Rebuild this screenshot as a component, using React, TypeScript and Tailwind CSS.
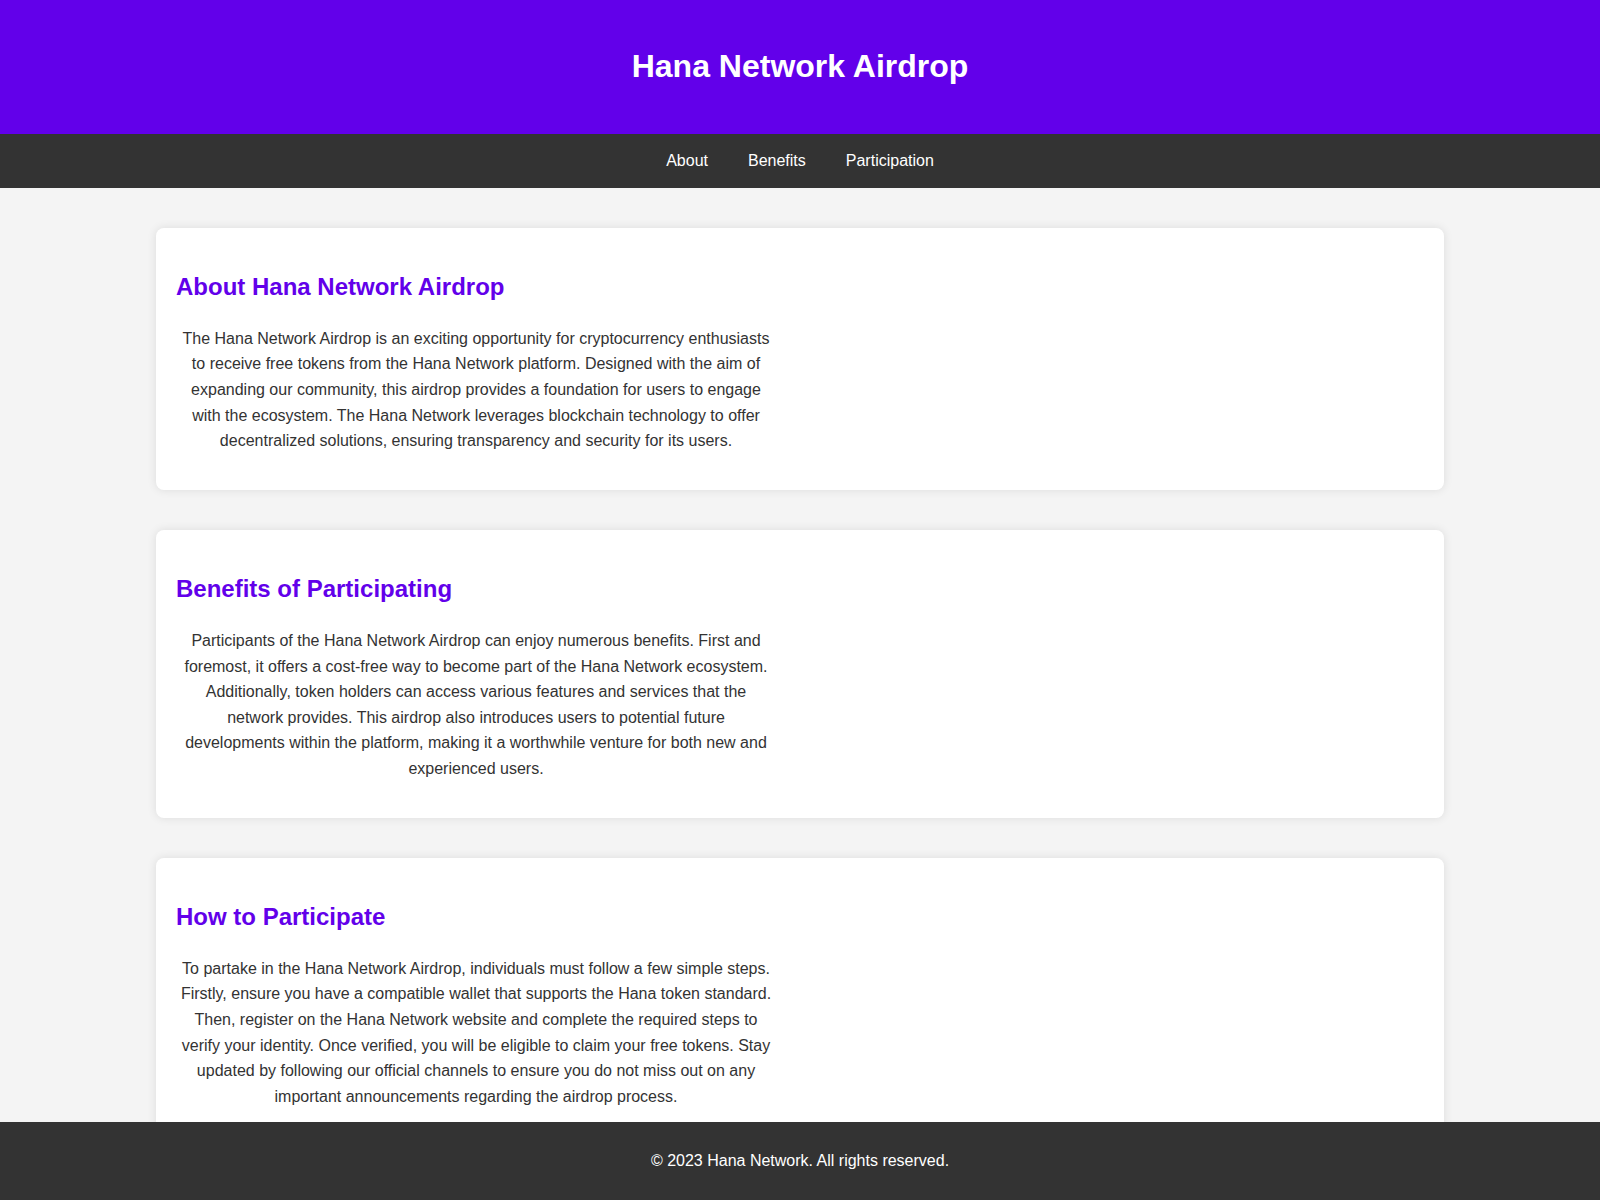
const sections = [
  {
    id: 'about',
    title: 'About Hana Network Airdrop',
    text: 'The Hana Network Airdrop is an exciting opportunity for cryptocurrency enthusiasts to receive free tokens from the Hana Network platform. Designed with the aim of expanding our community, this airdrop provides a foundation for users to engage with the ecosystem. The Hana Network leverages blockchain technology to offer decentralized solutions, ensuring transparency and security for its users.',
  },
  {
    id: 'benefits',
    title: 'Benefits of Participating',
    text: 'Participants of the Hana Network Airdrop can enjoy numerous benefits. First and foremost, it offers a cost-free way to become part of the Hana Network ecosystem. Additionally, token holders can access various features and services that the network provides. This airdrop also introduces users to potential future developments within the platform, making it a worthwhile venture for both new and experienced users.',
  },
  {
    id: 'participation',
    title: 'How to Participate',
    text: 'To partake in the Hana Network Airdrop, individuals must follow a few simple steps. Firstly, ensure you have a compatible wallet that supports the Hana token standard. Then, register on the Hana Network website and complete the required steps to verify your identity. Once verified, you will be eligible to claim your free tokens. Stay updated by following our official channels to ensure you do not miss out on any important announcements regarding the airdrop process.',
  },
]

const links = [
  { href: '#about', label: 'About' },
  { href: '#benefits', label: 'Benefits' },
  { href: '#participation', label: 'Participation' },
]

export default function App() {
  return (
    <div className="min-h-screen bg-[#f4f4f4] text-[#333] text-base leading-[1.6] font-['Liberation_Sans',Arial,sans-serif]">
      <header className="bg-[#6200ea] text-white text-center p-5">
        <h1 className="text-[32px] leading-[1.6] font-bold my-[21.44px]">Hana Network Airdrop</h1>
      </header>

      <nav className="bg-[#333] flex justify-center py-[14px]">
        {links.map((l) => (
          <a key={l.href} href={l.href} className="text-white mx-5">
            {l.label}
          </a>
        ))}
      </nav>

      <main className="w-[1288px] mx-auto pt-10 pb-[120px] flex flex-col gap-10">
        {sections.map((s) => (
          <section
            key={s.id}
            id={s.id}
            className="bg-white rounded-lg p-5 shadow-[0_0_10px_rgba(0,0,0,0.1)]"
          >
            <h2 className="text-2xl leading-[1.6] font-bold text-[#6200ea] my-[19.92px]">{s.title}</h2>
            <p className="max-w-[600px] text-center my-4">{s.text}</p>
          </section>
        ))}
      </main>

      <footer className="fixed bottom-0 left-0 right-0 bg-[#333] text-white text-center py-[26px]">
        <p>© 2023 Hana Network. All rights reserved.</p>
      </footer>
    </div>
  )
}
